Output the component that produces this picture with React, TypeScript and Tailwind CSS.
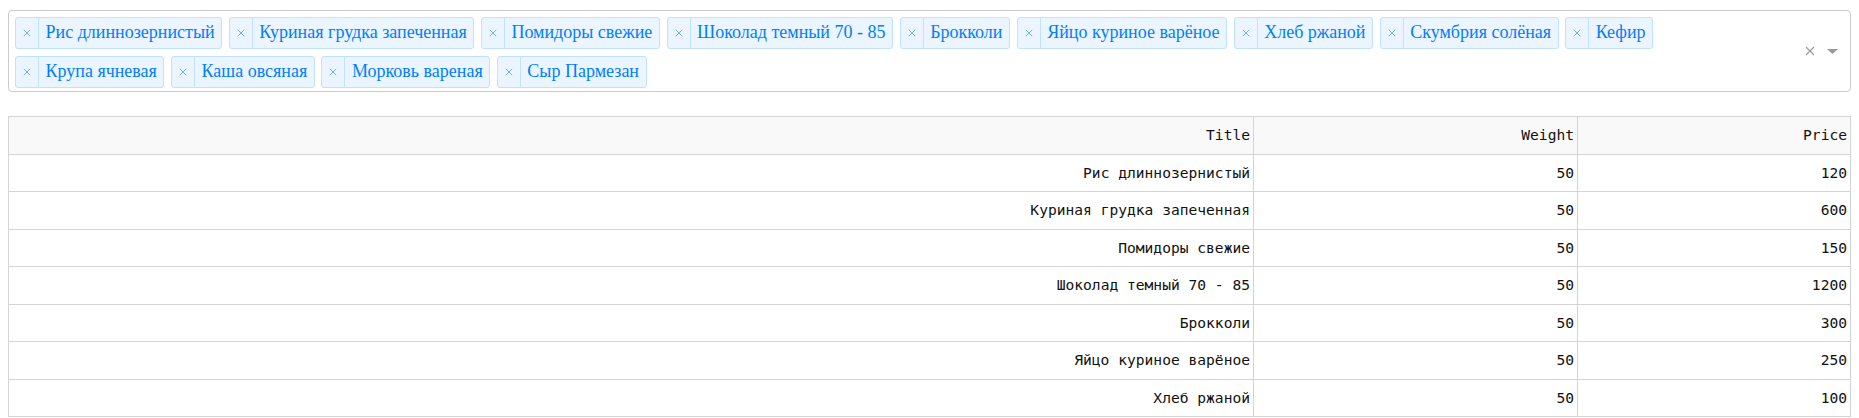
import React from "react";

type Product = {
  title: string;
  weight: number;
  price: number;
};

const SELECTED = [
  "Рис длиннозернистый",
  "Куриная грудка запеченная",
  "Помидоры свежие",
  "Шоколад темный 70 - 85",
  "Брокколи",
  "Яйцо куриное варёное",
  "Хлеб ржаной",
  "Скумбрия солёная",
  "Кефир",
  "Крупа ячневая",
  "Каша овсяная",
  "Морковь вареная",
  "Сыр Пармезан",
];

// only the rows that fit in the window
const PRODUCTS: Product[] = [
  { title: "Рис длиннозернистый", weight: 50, price: 120 },
  { title: "Куриная грудка запеченная", weight: 50, price: 600 },
  { title: "Помидоры свежие", weight: 50, price: 150 },
  { title: "Шоколад темный 70 - 85", weight: 50, price: 1200 },
  { title: "Брокколи", weight: 50, price: 300 },
  { title: "Яйцо куриное варёное", weight: 50, price: 250 },
  { title: "Хлеб ржаной", weight: 50, price: 100 },
];

function Cross({ className, color }: { className: string; color: string }) {
  return (
    <svg viewBox="0 0 10 10" className={className} fill="none">
      <path d="M1 1L9 9M9 1L1 9" stroke={color} strokeWidth="1.1" />
    </svg>
  );
}

function Tag({ label }: { label: string }) {
  return (
    <div className="flex h-[31.5px] items-stretch rounded-[3px] border border-[#c2e0ff] bg-[#ebf5ff] text-[#007eff]">
      <span className="flex w-[23px] items-center justify-center border-r border-[#c2e0ff]">
        <Cross className="h-[8px] w-[8px]" color="#5fa8ff" />
      </span>
      <span className="flex items-center px-[6.5px] pb-[1px] text-[18px] leading-none">{label}</span>
    </div>
  );
}

function MultiSelect({ values }: { values: string[] }) {
  return (
    <div className="flex h-[82px] rounded-[4px] border border-[#cccccc] bg-white font-['Liberation_Serif',serif]">
      <div className="flex flex-1 flex-wrap content-start gap-x-[6.7px] gap-y-[7.5px] pl-[6px] pt-[6px] pr-[130px]">
        {values.map((value) => (
          <Tag key={value} label={value} />
        ))}
      </div>
      <div className="flex items-center gap-[12px] pr-[12px]">
        <Cross className="h-[10px] w-[10px]" color="#9a9a9a" />
        <svg viewBox="0 0 11 5" className="h-[5px] w-[11px]">
          <path d="M0 0H11L5.5 5Z" fill="#999999" />
        </svg>
      </div>
    </div>
  );
}

function ProductTable({ rows }: { rows: Product[] }) {
  const cell = "flex items-center justify-end border-r border-[#d4d4d4] pr-[3px]";
  return (
    <div className="border-l border-t border-[#d4d4d4] font-['DejaVu_Sans_Mono',monospace] text-[14.6px] text-[#111]">
      <div className="grid h-[37.5px] grid-cols-[1245px_324px_1fr] border-b border-[#d4d4d4] bg-[#f9f9f9]">
        <div className={cell}>Title</div>
        <div className={cell}>Weight</div>
        <div className={cell}>Price</div>
      </div>
      {rows.map((row) => (
        <div
          key={row.title}
          className="grid h-[37.5px] grid-cols-[1245px_324px_1fr] border-b border-[#d4d4d4]"
        >
          <div className={cell}>{row.title}</div>
          <div className={cell}>{row.weight}</div>
          <div className={cell}>{row.price}</div>
        </div>
      ))}
    </div>
  );
}

export default function App() {
  return (
    <div className="bg-white px-[8px] pt-[10px]">
      <MultiSelect values={SELECTED} />
      <div className="mt-[24px]">
        <ProductTable rows={PRODUCTS} />
      </div>
    </div>
  );
}
